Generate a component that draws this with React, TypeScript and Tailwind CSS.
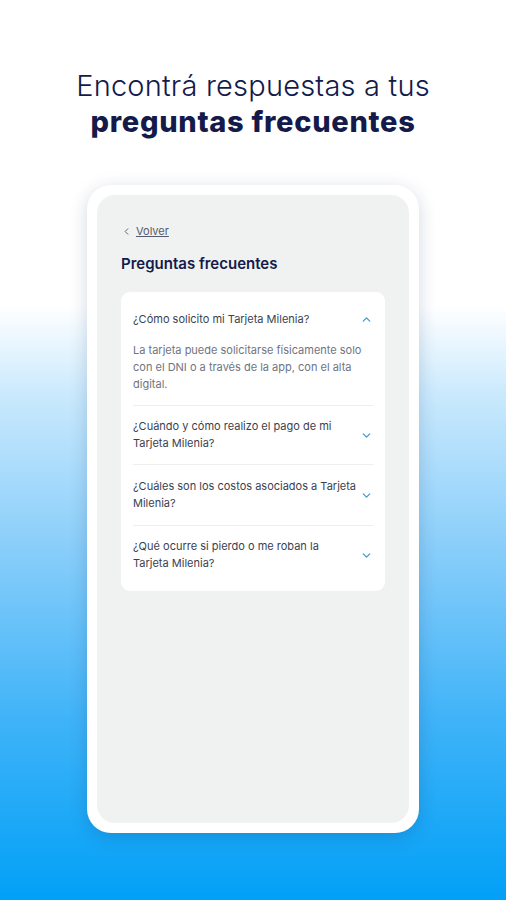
import { ChevronDown, ChevronUp, ChevronLeft } from 'lucide-react';

type Faq = {
  question: string;
  answer?: string;
  open?: boolean;
};

// line breaks follow the original screen
const faqs: Faq[] = [
  {
    question: '¿Cómo solicito mi Tarjeta Milenia?',
    answer: 'La tarjeta puede solicitarse físicamente solo con el DNI o a través de la app, con el alta digital.',
    open: true,
  },
  { question: '¿Cuándo y cómo realizo el pago de mi\nTarjeta Milenia?' },
  { question: '¿Cuáles son los costos asociados a Tarjeta\nMilenia?' },
  { question: '¿Qué ocurre si pierdo o me roban la\nTarjeta Milenia?' },
];

export default function App() {
  return (
    <div
      className="min-h-[900px] w-full bg-[linear-gradient(180deg,#ffffff_0%,#ffffff_34%,#c9e9fd_44%,#8ccffa_60%,#3fb3f8_80%,#02a0f7_100%)] flex flex-col items-center"
      style={{ fontFamily: 'Inter, "Noto Sans", sans-serif' }}
    >
      <div className="pt-[68px] text-center text-[#141a4a] leading-[36px]">
        <div className="text-[29px] font-light tracking-[0.2px]">Encontrá respuestas a tus</div>
        <div className="text-[29px] font-extrabold tracking-[0.7px]">preguntas frecuentes</div>
      </div>

      <div className="mt-[45px] w-[332px] h-[648px] bg-white rounded-[24px] p-[10px] shadow-[0_4px_18px_rgba(0,40,90,0.18)]">
        <div className="h-full bg-[#f0f1f1] rounded-[18px] px-[24px] pt-[28px]">
          <div className="flex items-center gap-[4px] text-[11px] text-[#555b70]">
            <ChevronLeft size={11} strokeWidth={2} />
            <span className="underline">Volver</span>
          </div>

          <h1 className="mt-[13px] text-[15px] font-semibold text-[#141a4a]">Preguntas frecuentes</h1>

          <div className="mt-[17px] bg-white rounded-[9px] px-[12px] pt-[7px] pb-[7px]">
            {faqs.map((f, i) => (
              <div
                key={i}
                className={i < faqs.length - 1 ? 'border-b border-[#eceef0]' : ''}
              >
                <div className={`flex items-center justify-between ${i === 2 ? 'pt-[13px] pb-[13px]' : 'py-[12px]'}`}>
                  <span className="flex-1 whitespace-pre-line text-[11px] leading-[17px] text-[#3a3f52]">{f.question}</span>
                  {f.open ? (
                    <ChevronUp size={13} strokeWidth={2.4} className="text-[#3b9fd0] shrink-0" />
                  ) : (
                    <ChevronDown size={13} strokeWidth={2.4} className="text-[#3b9fd0] shrink-0" />
                  )}
                </div>
                {f.open && f.answer && (
                  <p className="mt-[2px] text-[11px] leading-[17px] text-[#6f7482] pb-[12px]">{f.answer}</p>
                )}
              </div>
            ))}
          </div>
        </div>
      </div>
    </div>
  );
}
